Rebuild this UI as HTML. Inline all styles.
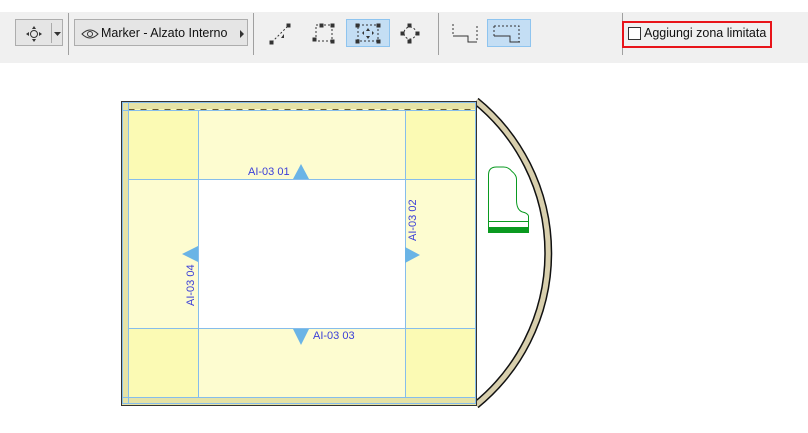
<!DOCTYPE html>
<html><head><meta charset="utf-8"><style>
body{margin:0;width:808px;height:433px;background:#fff;position:relative;overflow:hidden;font-family:"Liberation Sans",sans-serif}
.tb{position:absolute;left:0;top:12px;width:808px;height:51px;background:#f0f0f0}
.btn{position:absolute;top:19px;height:27px;border:1px solid #adadad;background:#e5e5e5;box-sizing:border-box}
.sel{position:absolute;top:19px;height:28px;border:1px solid #8ec4ef;background:#c4def4;box-sizing:border-box}
.sep{position:absolute;top:13px;width:1px;height:42px;background:#a0a0a0}
svg{position:absolute;left:0;top:0}
</style></head><body>
<div class="tb"></div>
<div class="btn" style="left:15px;width:48px"></div>
<div class="sep" style="left:68px"></div>
<div class="btn" style="left:74px;width:174px"></div>
<div style="position:absolute;left:101px;top:26px;font-size:12.5px;color:#111">Marker - Alzato Interno</div>
<div class="sep" style="left:253px"></div>
<div class="sel" style="left:346px;width:44px"></div>
<div class="sep" style="left:438px"></div>
<div class="sel" style="left:487px;width:44px"></div>
<div class="sep" style="left:622px"></div>
<div style="position:absolute;left:622px;top:21px;width:146px;height:23px;border:2px solid #e8141a"></div>
<div style="position:absolute;left:628px;top:27px;width:11px;height:11px;border:1px solid #333;background:#fff"></div>
<div style="position:absolute;left:644px;top:26px;font-size:12.5px;color:#111">Aggiungi zona limitata</div>
<svg width="808" height="433">
<circle cx="34" cy="34" r="3.5" fill="none" stroke="#333"/>
<path d="M34 26l-2 3h4zM34 42l-2-3h4zM26 34l3-2v4zM42 34l-3-2v4z" fill="#333"/>
<line x1="51.5" y1="23" x2="51.5" y2="43" stroke="#aaa"/>
<path d="M54 32h7l-3.5 4z" fill="#333"/>
<path d="M82 34q8-8 16 0q-8 8-16 0z" fill="none" stroke="#333"/><circle cx="90" cy="34" r="2.5" fill="none" stroke="#333"/>
<path d="M240 30v8l4-4z" fill="#333"/>
<g stroke="#333" fill="#333">
<line x1="272" y1="42" x2="288" y2="26" stroke-dasharray="2,2"/><rect x="270" y="41" width="3" height="3"/><rect x="287" y="24" width="3" height="3"/><path d="M281 38l3-4v4z" stroke="none"/>
<rect x="316" y="25" width="16" height="16" fill="none" stroke-dasharray="2,2"/><rect x="313" y="38" width="3" height="3"/><rect x="331" y="40" width="3" height="3"/><rect x="331" y="24" width="3" height="3"/><rect x="320" y="24" width="3" height="3"/>
<rect x="358" y="25" width="20" height="16" fill="none" stroke-dasharray="2,2"/><rect x="356" y="24" width="3" height="3"/><rect x="377" y="24" width="3" height="3"/><rect x="356" y="40" width="3" height="3"/><rect x="377" y="40" width="3" height="3"/>
<path d="M368 28l-2 3h4zM368 39l-2-3h4zM362 33l2-2v4zM374 33l-2-2v4z" stroke="none"/>
<circle cx="410" cy="33" r="6" fill="none" stroke-dasharray="2,2"/><rect x="408" y="24" width="3" height="3"/><rect x="408" y="40" width="3" height="3"/><rect x="401" y="32" width="3" height="3"/><rect x="416" y="32" width="3" height="3"/>
<path d="M453 24v12h15v6h9v-18" fill="none" stroke-dasharray="2,2"/>
<path d="M453 36h15v6h9" fill="none"/>
<path d="M494 26h25v16h-9M494 26v10" fill="none" stroke-dasharray="2,2"/>
<path d="M494 36h16v6h10" fill="none"/>
</g>
<path d="M476 101 A196 196 0 0 1 476 405" fill="none" stroke="#111" stroke-width="8"/>
<path d="M476 101 A196 196 0 0 1 476 405" fill="none" stroke="#d8cfad" stroke-width="5"/>
<rect x="121.5" y="101.5" width="355" height="304" fill="#e6e3a6" stroke="#333"/>
<rect x="128" y="109" width="348" height="289" fill="#fdfcd0"/>
<rect x="128" y="109" width="70" height="70" fill="#fbfab4"/><rect x="405" y="109" width="71" height="70" fill="#fbfab4"/>
<rect x="128" y="329" width="70" height="69" fill="#fbfab4"/><rect x="405" y="329" width="71" height="69" fill="#fbfab4"/>
<rect x="198" y="179" width="207" height="150" fill="#fff"/>
<rect x="128.5" y="109.5" width="347" height="288" fill="none" stroke="#6b5a2a" stroke-dasharray="6,6"/>
<g stroke="#86bdeb" fill="none">
<rect x="122.5" y="102.5" width="353" height="301"/>
<line x1="128.5" y1="102" x2="128.5" y2="404"/>
<line x1="122" y1="110.5" x2="476" y2="110.5"/><line x1="122" y1="397.5" x2="476" y2="397.5"/>
<line x1="198.5" y1="110" x2="198.5" y2="397"/><line x1="405.5" y1="110" x2="405.5" y2="397"/>
<line x1="128" y1="179.5" x2="476" y2="179.5"/><line x1="128" y1="328.5" x2="476" y2="328.5"/>
</g>
<g fill="#6ab4e6"><path d="M301 164l8 15h-16z"/><path d="M301 345l8-16h-16z"/><path d="M182 254l16-8v16z"/><path d="M420 255l-15-8v16z"/></g>
<g fill="#3a3ed8" font-size="11" font-family="Liberation Sans,sans-serif">
<text x="248" y="175">AI-03 01</text>
<text x="313" y="339">AI-03 03</text>
<text transform="translate(416,241) rotate(-90)">AI-03 02</text>
<text transform="translate(194,306) rotate(-90)">AI-03 04</text>
</g>
<path d="M488.5 227.5V175q0-8 8-8h7q5 0 8 4q5 4 5 8v21q0 10 6 12q5 1 6 4v14.5z" fill="#fff" stroke="#0a9a20"/>
<line x1="488" y1="221.5" x2="528" y2="221.5" stroke="#0a9a20"/>
<rect x="488" y="227" width="41" height="6" fill="#0a9a20"/>
</svg>
</body></html>
